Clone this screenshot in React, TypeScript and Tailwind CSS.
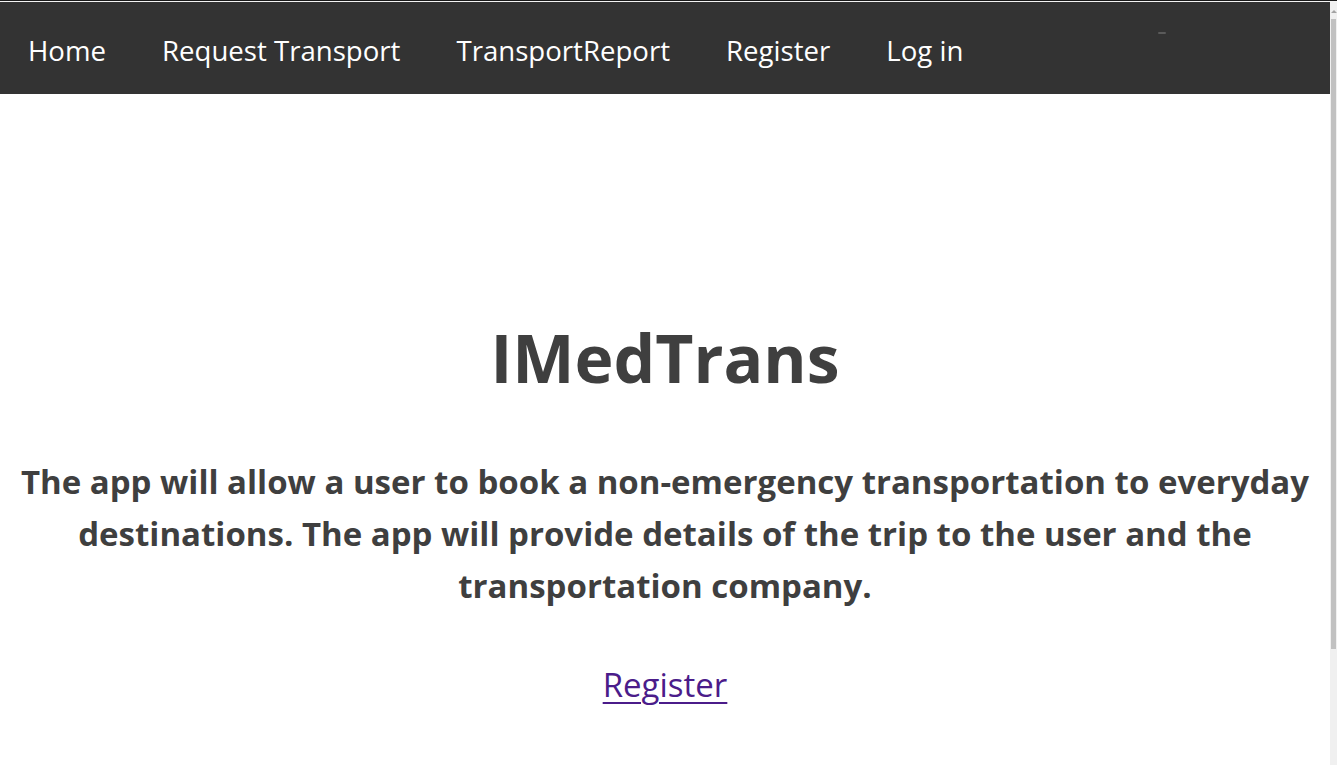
import React from 'react';

const navLinks = ['Home', 'Request Transport', 'TransportReport', 'Register', 'Log in'];

const blurb = [
  'The app will allow a user to book a non-emergency transportation to everyday',
  'destinations. The app will provide details of the trip to the user and the',
  'transportation company.',
];

export default function App() {
  return (
    <div className="flex flex-col h-[765px] overflow-hidden bg-white font-['Open_Sans',sans-serif]">
      <div className="h-[1px] bg-[#1a1a1a]" />
      <div className="h-[1px] bg-[#f4f4f4]" />
      <div className="flex flex-1 min-h-0">
        <div className="flex-1 flex flex-col">
          <nav className="h-[92px] bg-[#333333] flex items-center">
            <ul className="flex items-center pl-0">
              {navLinks.map((link) => (
                <li key={link}>
                  <a className="block px-[28px] text-[27.6px] leading-[36px] text-white pt-[4px] cursor-pointer">
                    {link}
                  </a>
                </li>
              ))}
            </ul>
            <span className="ml-auto mr-[164px] self-start mt-[30px] w-[8px] h-[2px] bg-[#5a5a5a] rounded" />
          </nav>

          <main className="flex flex-col items-center text-[#3f3f3f] text-center">
            <h1 className="mt-[223px] text-[66px] leading-[80px] font-bold">IMedTrans</h1>
            <div className="mt-[59px] text-[33px] leading-[52px] font-bold">
              {blurb.map((line) => (
                <p key={line} className="whitespace-nowrap">{line}</p>
              ))}
            </div>
            <a className="mt-[53px] text-[33px] leading-[40px] text-[#4b1c8a] underline underline-offset-[5px] decoration-[2px] cursor-pointer">
              Register
            </a>
          </main>
        </div>

        <div className="w-[7px] bg-[#f0f0f0] flex flex-col items-center">
          <span className="mt-[8px] w-0 h-0 border-l-[3px] border-r-[3px] border-b-[3px] border-l-transparent border-r-transparent border-b-[#a3a3a3]" />
          <div className="mt-[6px] w-[5px] h-[630px] bg-[#c1c1c1]" />
        </div>
      </div>
    </div>
  );
}
